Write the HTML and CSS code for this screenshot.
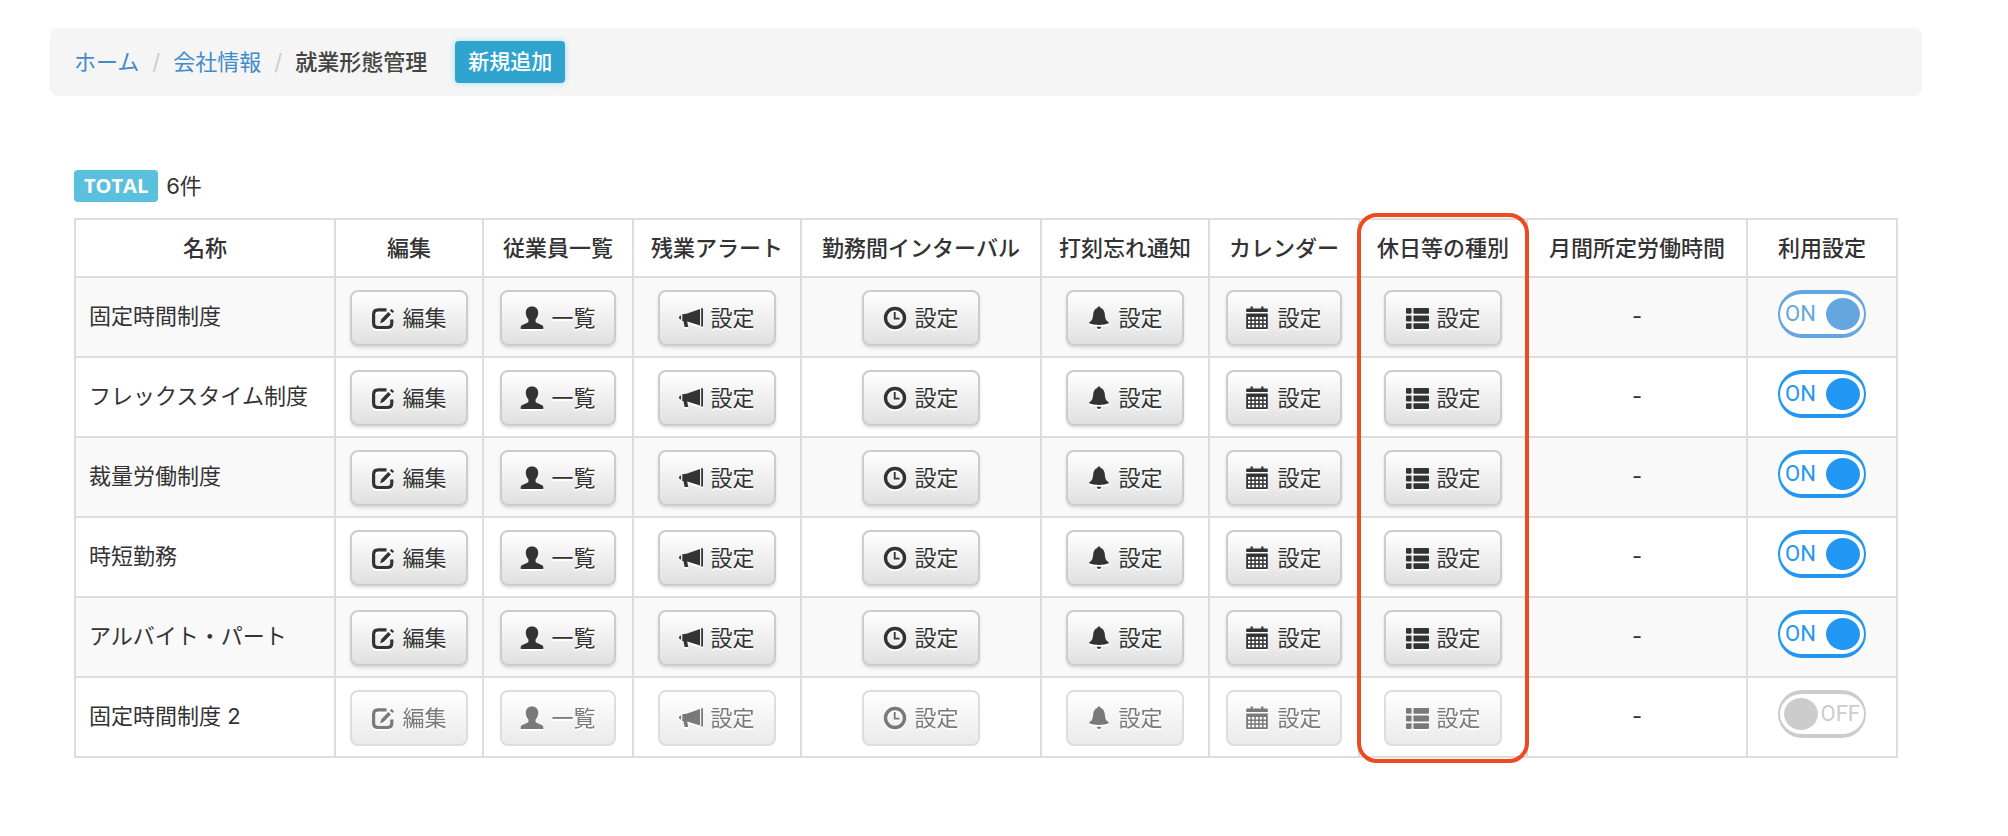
FILE: index.html
```html
<!DOCTYPE html>
<html lang="ja">
	<head>
		<meta charset="utf-8">
		<title>就業形態管理</title>
		<link rel="stylesheet" href="styles.css">
	</head>

	<body>
		<svg class="sprite" aria-hidden="true">
			<symbol id="i-edit" viewBox="0 0 24 24">
				<path d="M15.500 3.900H7.200Q2.600 3.900 2.600 8.500v8.400q0 4.600 4.600 4.600h9q4.600 0 4.600-4.600v-3.400" fill="none" stroke="currentColor" stroke-width="3.200"/>
				<path d="M9 17.400l1.300-4.200 7-7.200 2.600 2.600-7 7.200zM18.900 4.600l1.700-1.600 2.500 2.500-1.700 1.600z"/>
			</symbol>
			<symbol id="i-user" viewBox="0 0 24 24">
				<path d="M12 .4c4 0 6.200 2.600 6.200 6.200 0 3-1.100 5.600-2.600 7v1.600c0 1 .5 1.400 1.600 1.900l4.400 2c1.200.6 1.700 1.100 1.700 2.200V23H.7v-1.700c0-1.100.5-1.600 1.700-2.200l4.400-2c1.100-.5 1.600-.9 1.600-1.900v-1.600c-1.500-1.400-2.600-4-2.600-7C5.800 3 8 .4 12 .4z"/>
			</symbol>
			<symbol id="i-horn" viewBox="0 0 24 24">
				<path d="M22.200 2.200H24v18.200h-1.800zM7.500 7.800L21 3v16.400L8.200 15.500l1 5.500H5.600L4.400 15.300 3.300 15V8.300zM2 9.500v4.200C.8 13.500 0 12.800 0 11.600s.8-1.900 2-2.100z"/>
			</symbol>
			<symbol id="i-clock" viewBox="0 0 24 24">
				<circle cx="12" cy="12" r="9.500" fill="none" stroke="currentColor" stroke-width="3.400"/>
				<path d="M11.700 6v6.600h4.800" fill="none" stroke="currentColor" stroke-width="1.900"/>
			</symbol>
			<symbol id="i-bell" viewBox="0 0 24 24">
				<path d="M12 .4c1 0 1.600.7 1.600 1.700 2.600.8 3.900 3 4.200 6.200.4 4.300 1 6.400 3.500 7.600.6.300.7 1 .1 1.400C19.500 18.500 16 19 12 19s-7.500-.5-9.400-1.700c-.6-.4-.5-1.100.1-1.400 2.500-1.200 3.100-3.300 3.500-7.600.3-3.200 1.600-5.400 4.200-6.200 0-1 .6-1.700 1.600-1.700zM9.700 20.800h4.600Q13.700 23 12 23t-2.300-2.200z"/>
			</symbol>
			<symbol id="i-calendar" viewBox="0 0 24 24">
				<path fill-rule="evenodd" d="M1 2.400h3.600V.6h2.200v1.800h8.400V.6h2.200v1.800H21q.8 0 .8.8V6H.200V3.200q0-.8.8-.8zM.200 7.600h21.600v14.600q0 .8-.8.8H1q-.8 0-.8-.8zM2 11v2.400h2.400V11zm3.900 0v2.400h2.400V11zm3.900 0v2.400h2.400V11zm3.900 0v2.400h2.400V11zm3.900 0v2.400H20V11zM2 14.900v2.400h2.400v-2.400zm3.900 0v2.400h2.400v-2.400zm3.900 0v2.400h2.400v-2.400zm3.900 0v2.400h2.400v-2.400zm3.900 0v2.400H20v-2.400zM2 18.800v2.400h2.400v-2.400zm3.900 0v2.400h2.400v-2.400zm3.900 0v2.400h2.400v-2.400zm3.900 0v2.400h2.400v-2.400zm3.900 0v2.400H20v-2.400z"/>
			</symbol>
			<symbol id="i-list" viewBox="0 0 24 24">
				<rect x="1" y="2" width="5.600" height="5.800" rx="1"/><rect x="8.400" y="2" width="15.600" height="5.800" rx="1"/>
				<rect x="1" y="9.600" width="5.600" height="5.800" rx="1"/><rect x="8.400" y="9.600" width="15.600" height="5.800" rx="1"/>
				<rect x="1" y="17.200" width="5.600" height="5.800" rx="1"/><rect x="8.400" y="17.200" width="15.600" height="5.800" rx="1"/>
			</symbol>
		</svg>

		<nav class="breadcrumb">
			<ol>
				<li><a href="#">ホーム</a></li>
				<li><a href="#">会社情報</a></li>
				<li class="active">就業形態管理</li>
			</ol>
			<button type="button" class="btn-add">新規追加</button>
		</nav>

		<main>
			<p class="total"><span class="badge">TOTAL</span>6件</p>
			<div class="table-wrap">
				<table>
					<colgroup>
						<col>
						<col class="w-s">
						<col class="w-m">
						<col class="w-l">
						<col class="w-xxl">
						<col class="w-l">
						<col class="w-m">
						<col class="w-l">
						<col class="w-xl">
						<col class="w-m">
					</colgroup>
					<thead>
						<tr>
							<th>名称</th>
							<th>編集</th>
							<th>従業員一覧</th>
							<th>残業アラート</th>
							<th>勤務間インターバル</th>
							<th>打刻忘れ通知</th>
							<th>カレンダー</th>
							<th>休日等の種別</th>
							<th>月間所定労働時間</th>
							<th>利用設定</th>
						</tr>
					</thead>
					<tbody>
						<tr>
							<td class="name">固定時間制度</td>
							<td><button type="button" class="btn"><svg><use href="#i-edit"/></svg>編集</button></td>
							<td><button type="button" class="btn narrow"><svg><use href="#i-user"/></svg>一覧</button></td>
							<td><button type="button" class="btn"><svg><use href="#i-horn"/></svg>設定</button></td>
							<td><button type="button" class="btn"><svg><use href="#i-clock"/></svg>設定</button></td>
							<td><button type="button" class="btn"><svg><use href="#i-bell"/></svg>設定</button></td>
							<td><button type="button" class="btn narrow"><svg><use href="#i-calendar"/></svg>設定</button></td>
							<td><button type="button" class="btn"><svg><use href="#i-list"/></svg>設定</button></td>
							<td class="hours">-</td>
							<td class="use"><label class="switch"><input type="checkbox" checked disabled><span class="on">ON</span><span class="off">OFF</span></label></td>
						</tr>
						<tr>
							<td class="name">フレックスタイム制度</td>
							<td><button type="button" class="btn"><svg><use href="#i-edit"/></svg>編集</button></td>
							<td><button type="button" class="btn narrow"><svg><use href="#i-user"/></svg>一覧</button></td>
							<td><button type="button" class="btn"><svg><use href="#i-horn"/></svg>設定</button></td>
							<td><button type="button" class="btn"><svg><use href="#i-clock"/></svg>設定</button></td>
							<td><button type="button" class="btn"><svg><use href="#i-bell"/></svg>設定</button></td>
							<td><button type="button" class="btn narrow"><svg><use href="#i-calendar"/></svg>設定</button></td>
							<td><button type="button" class="btn"><svg><use href="#i-list"/></svg>設定</button></td>
							<td class="hours">-</td>
							<td class="use"><label class="switch"><input type="checkbox" checked><span class="on">ON</span><span class="off">OFF</span></label></td>
						</tr>
						<tr>
							<td class="name">裁量労働制度</td>
							<td><button type="button" class="btn"><svg><use href="#i-edit"/></svg>編集</button></td>
							<td><button type="button" class="btn narrow"><svg><use href="#i-user"/></svg>一覧</button></td>
							<td><button type="button" class="btn"><svg><use href="#i-horn"/></svg>設定</button></td>
							<td><button type="button" class="btn"><svg><use href="#i-clock"/></svg>設定</button></td>
							<td><button type="button" class="btn"><svg><use href="#i-bell"/></svg>設定</button></td>
							<td><button type="button" class="btn narrow"><svg><use href="#i-calendar"/></svg>設定</button></td>
							<td><button type="button" class="btn"><svg><use href="#i-list"/></svg>設定</button></td>
							<td class="hours">-</td>
							<td class="use"><label class="switch"><input type="checkbox" checked><span class="on">ON</span><span class="off">OFF</span></label></td>
						</tr>
						<tr>
							<td class="name">時短勤務</td>
							<td><button type="button" class="btn"><svg><use href="#i-edit"/></svg>編集</button></td>
							<td><button type="button" class="btn narrow"><svg><use href="#i-user"/></svg>一覧</button></td>
							<td><button type="button" class="btn"><svg><use href="#i-horn"/></svg>設定</button></td>
							<td><button type="button" class="btn"><svg><use href="#i-clock"/></svg>設定</button></td>
							<td><button type="button" class="btn"><svg><use href="#i-bell"/></svg>設定</button></td>
							<td><button type="button" class="btn narrow"><svg><use href="#i-calendar"/></svg>設定</button></td>
							<td><button type="button" class="btn"><svg><use href="#i-list"/></svg>設定</button></td>
							<td class="hours">-</td>
							<td class="use"><label class="switch"><input type="checkbox" checked><span class="on">ON</span><span class="off">OFF</span></label></td>
						</tr>
						<tr>
							<td class="name">アルバイト・パート</td>
							<td><button type="button" class="btn"><svg><use href="#i-edit"/></svg>編集</button></td>
							<td><button type="button" class="btn narrow"><svg><use href="#i-user"/></svg>一覧</button></td>
							<td><button type="button" class="btn"><svg><use href="#i-horn"/></svg>設定</button></td>
							<td><button type="button" class="btn"><svg><use href="#i-clock"/></svg>設定</button></td>
							<td><button type="button" class="btn"><svg><use href="#i-bell"/></svg>設定</button></td>
							<td><button type="button" class="btn narrow"><svg><use href="#i-calendar"/></svg>設定</button></td>
							<td><button type="button" class="btn"><svg><use href="#i-list"/></svg>設定</button></td>
							<td class="hours">-</td>
							<td class="use"><label class="switch"><input type="checkbox" checked><span class="on">ON</span><span class="off">OFF</span></label></td>
						</tr>
						<tr>
							<td class="name">固定時間制度 2</td>
							<td><button type="button" class="btn" disabled><svg><use href="#i-edit"/></svg>編集</button></td>
							<td><button type="button" class="btn narrow" disabled><svg><use href="#i-user"/></svg>一覧</button></td>
							<td><button type="button" class="btn" disabled><svg><use href="#i-horn"/></svg>設定</button></td>
							<td><button type="button" class="btn" disabled><svg><use href="#i-clock"/></svg>設定</button></td>
							<td><button type="button" class="btn" disabled><svg><use href="#i-bell"/></svg>設定</button></td>
							<td><button type="button" class="btn narrow" disabled><svg><use href="#i-calendar"/></svg>設定</button></td>
							<td><button type="button" class="btn" disabled><svg><use href="#i-list"/></svg>設定</button></td>
							<td class="hours">-</td>
							<td class="use"><label class="switch"><input type="checkbox"><span class="on">ON</span><span class="off">OFF</span></label></td>
						</tr>
					</tbody>
				</table>
				<div class="highlight"></div>
			</div>
		</main>
	</body>
</html>
```
FILE: styles.css
```css
* {
	box-sizing: border-box;
}

body {
	margin: 0px;
	padding: 28px 86px 28px 50px;
	font-family: Inter, "Noto Sans CJK JP", sans-serif;
	font-size: 22px;
	line-height: 32px;
	color: #333;
	background: #fff;
}

button {
	font-family: inherit;
	cursor: pointer;
}

.sprite {
	position: absolute;
	width: 0px;
	height: 0px;
}

/* breadcrumb */
.breadcrumb {
	display: flex;
	align-items: center;
	gap: 28px;
	min-height: 68px;
	padding: 12px 24px;
	background: #f5f5f5;
	border-radius: 8px;
}

.breadcrumb ol {
	display: flex;
	margin: 0px;
	padding: 0px;
	list-style: none;
}

.breadcrumb li + li::before {
	content: "/";
	padding: 0px 13px;
	font-weight: normal;
	color: #ccc;
}

.breadcrumb a {
	color: #428bca;
	text-decoration: none;
}

.breadcrumb .active {
	font-weight: 500;
	color: #444;
}

.btn-add {
	height: 42px;
	padding: 0px 13px;
	border: 0px;
	border-radius: 4px;
	font-size: 21px;
	font-weight: 500;
	line-height: 42px;
	color: #fff;
	background: #2fa4cf;
	box-shadow: 0px 0px 6px #9fdcf0;
}

main {
	padding: 74px 24px 0px;
}

.total {
	display: flex;
	align-items: center;
	gap: 8px;
	margin: 0px 0px 16px;
}

.badge {
	padding: 0px 10px;
	border-radius: 4px;
	font-family: "Open Sans", sans-serif;
	font-size: 20px;
	font-weight: bold;
	color: #fff;
	background: #5bc0de;
}

/* list table */
.table-wrap {
	position: relative;
}

table {
	width: 100%;
	table-layout: fixed;
	border-collapse: collapse;
}

.w-s {
	width: 148px;
}

.w-m {
	width: 150px;
}

.w-l {
	width: 168px;
}

.w-xl {
	width: 220px;
}

.w-xxl {
	width: 240px;
}

th, td {
	border: 2px solid #ddd;
	text-align: center;
	white-space: nowrap;
}

th {
	height: 58px;
	padding: 0px;
	font-weight: 500;
}

td {
	height: 80px;
	padding: 12px 0px 10px;
}

td.name {
	padding: 8px 13px 10px;
	text-align: left;
}

td.hours {
	padding: 8px 0px 10px;
}

td.use {
	vertical-align: top;
}

tbody tr:nth-child(odd) {
	background: #f9f9f9;
}

.btn {
	display: inline-flex;
	align-items: center;
	justify-content: center;
	gap: 7px;
	width: 118px;
	height: 56px;
	padding: 0px;
	border: 2px solid #ccc;
	border-radius: 8px;
	font-size: 22px;
	line-height: 32px;
	color: #333;
	vertical-align: top;
	text-shadow: 0px 2px 0px #fff;
	background: linear-gradient(to bottom, #fff, #e0e0e0);
	box-shadow: 0px 2px 3px rgba(0,0,0,0.12);
}

.btn.narrow {
	width: 116px;
}

.btn svg {
	width: 24px;
	height: 24px;
	fill: currentColor;
	filter: drop-shadow(0px 2px 0px #fff);
}

.btn:disabled {
	opacity: 0.65;
	box-shadow: none;
	cursor: default;
}

/* on / off switch, the checkbox is the knob */
.switch {
	display: inline-flex;
	align-items: center;
	justify-content: space-between;
	width: 88px;
	height: 48px;
	padding: 0px 4px;
	border: solid #ccc;
	border-width: 4px 2px;
	border-radius: 24px;
	font-family: Roboto, sans-serif;
	vertical-align: top;
	color: #ccc;
	background: #fff;
}

.switch input {
	appearance: none;
	width: 34px;
	height: 32px;
	margin: 0px;
	border-radius: 50%;
	background: currentColor;
	color: inherit;
}

.switch .on {
	display: none;
	padding-left: 1px;
}

.switch:has(:checked) {
	border-color: #2196f3;
	color: #2196f3;
}

.switch:has(:checked:disabled) {
	border-color: #64a6df;
	color: #64a6df;
}

.switch input:checked {
	order: 1;
}

.switch input:checked ~ .on {
	display: inline;
}

.switch input:checked ~ .off {
	display: none;
}

/* red frame round the column */
.highlight {
	position: absolute;
	top: -5px;
	right: 369px;
	bottom: -5px;
	width: 172px;
	border: 4px solid #ee4a20;
	border-radius: 20px;
	pointer-events: none;
}
```
